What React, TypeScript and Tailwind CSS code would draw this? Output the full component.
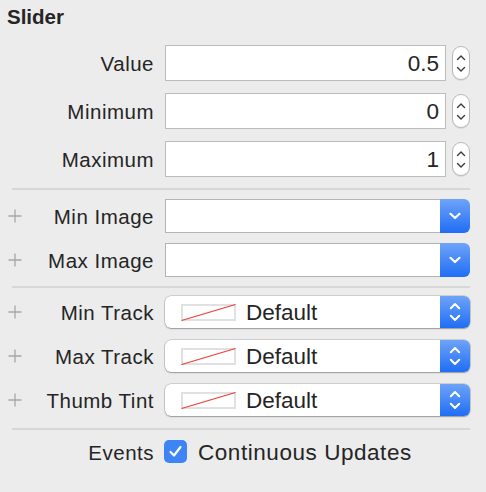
import React from "react";

const Plus = () => (
  <svg width="14" height="14" viewBox="0 0 14 14" className="ml-[8px] shrink-0">
    <path d="M7 0.5V13.5M0.5 7H13.5" stroke="#a6a6a6" strokeWidth="1.3" fill="none" />
  </svg>
);

const Stepper = () => (
  <div className="ml-[6px] flex h-[34px] w-[18px] flex-col items-center justify-center gap-[5px] rounded-[9px] border border-[#b9b9b9] bg-white shadow-[0_1px_0_rgba(0,0,0,0.08)]">
    <svg width="10" height="7" viewBox="0 0 10 7">
      <path d="M1.5 5.5L5 2L8.5 5.5" stroke="#3a3a3a" strokeWidth="1.4" fill="none" strokeLinecap="round" strokeLinejoin="round" />
    </svg>
    <svg width="10" height="7" viewBox="0 0 10 7">
      <path d="M1.5 1.5L5 5L8.5 1.5" stroke="#3a3a3a" strokeWidth="1.4" fill="none" strokeLinecap="round" strokeLinejoin="round" />
    </svg>
  </div>
);

const NumberRow = ({ label, value, mt }: { label: string; value: string; mt: string }) => (
  <div className={`flex h-[36px] items-center ${mt}`}>
    <div className="w-[154px] pt-[2px] text-right text-[20.5px] leading-[24px] tracking-[0.5px]">{label}</div>
    <div className="ml-[11px] flex h-[36px] w-[281px] items-center justify-end border border-[#bcbcbc] bg-white pr-[6px] pt-[2px] text-[22.5px] leading-[26px]">
      {value}
    </div>
    <Stepper />
  </div>
);

const Separator = ({ mt }: { mt: string }) => (
  <div className={`ml-[12px] h-[2px] w-[458px] bg-[#d7d7d7] ${mt}`} />
);

const BlueGrad = "bg-[linear-gradient(#6ea3f8,#1f6ef5)]";

const ImageRow = ({ label, mt }: { label: string; mt: string }) => (
  <div className={`flex h-[34px] items-center ${mt}`}>
    <div className="flex w-[154px] items-center">
      <Plus />
      <div className="flex-1 pt-[2px] text-right text-[20.5px] leading-[24px] tracking-[0.5px]">{label}</div>
    </div>
    <div className="ml-[11px] flex h-[34px] w-[305px]">
      <div className="h-full flex-1 border-y border-l border-[#b4b4b4] bg-white" />
      <div className={`flex h-full w-[30px] items-center justify-center rounded-r-[6px] ${BlueGrad}`}>
        <svg width="12" height="8" viewBox="0 0 12 8">
          <path d="M1.5 1.8L6 6L10.5 1.8" stroke="white" strokeWidth="2.2" fill="none" strokeLinecap="round" strokeLinejoin="round" />
        </svg>
      </div>
    </div>
  </div>
);

const ColorRow = ({ label, mt }: { label: string; mt: string }) => (
  <div className={`flex h-[32px] items-center ${mt}`}>
    <div className="flex w-[154px] items-center">
      <Plus />
      <div className="flex-1 pt-[2px] text-right text-[20.5px] leading-[24px] tracking-[0.5px]">{label}</div>
    </div>
    <div className="ml-[11px] flex h-[32px] w-[305px] rounded-[6px] bg-white shadow-[0_0_0_0.5px_rgba(0,0,0,0.25),0_1px_1.5px_rgba(0,0,0,0.25)]">
      <div className="flex flex-1 items-center">
        <svg width="55" height="17" viewBox="0 0 55 17" className="ml-[16px] shrink-0">
          <rect x="1" y="1" width="53" height="15" fill="white" stroke="#e1e1e1" strokeWidth="2" />
          <path d="M0.5 16.5L54.5 0.5" stroke="#f0483e" strokeWidth="1.2" />
        </svg>
        <span className="ml-[10px] pt-[2px] text-[22.5px] leading-[26px]">Default</span>
      </div>
      <div className={`flex h-full w-[30px] flex-col items-center justify-center gap-[4px] rounded-r-[6px] ${BlueGrad}`}>
        <svg width="12" height="8" viewBox="0 0 12 8">
          <path d="M1.8 6.2L6 2L10.2 6.2" stroke="white" strokeWidth="2" fill="none" strokeLinecap="round" strokeLinejoin="round" />
        </svg>
        <svg width="12" height="8" viewBox="0 0 12 8">
          <path d="M1.8 1.8L6 6L10.2 1.8" stroke="white" strokeWidth="2" fill="none" strokeLinecap="round" strokeLinejoin="round" />
        </svg>
      </div>
    </div>
  </div>
);

export default function App() {
  return (
    <div className="flex h-[492px] w-[486px] flex-col bg-[#ececec] font-['Liberation_Sans',Arial,sans-serif] text-[#252525]">
      <div className="pl-[7px] pt-[5px] text-[20.5px] font-bold leading-[24px]">Slider</div>
      <NumberRow label="Value" value="0.5" mt="mt-[16px]" />
      <NumberRow label="Minimum" value="0" mt="mt-[12px]" />
      <NumberRow label="Maximum" value="1" mt="mt-[12px]" />
      <Separator mt="mt-[11px]" />
      <ImageRow label="Min Image" mt="mt-[9px]" />
      <ImageRow label="Max Image" mt="mt-[10px]" />
      <Separator mt="mt-[9px]" />
      <ColorRow label="Min Track" mt="mt-[8px]" />
      <ColorRow label="Max Track" mt="mt-[12px]" />
      <ColorRow label="Thumb Tint" mt="mt-[12px]" />
      <Separator mt="mt-[12px]" />
      <div className="mt-[10px] flex h-[23px] items-center">
        <div className="w-[154px] pt-[2px] text-right text-[20.5px] leading-[24px] tracking-[0.5px]">Events</div>
        <div className="ml-[10px] flex h-[23px] w-[23px] items-center justify-center rounded-[5px] bg-[#3d84f6]">
          <svg width="15" height="13" viewBox="0 0 15 13">
            <path d="M2.5 7L6 10.5L12.5 2" stroke="white" strokeWidth="2.2" fill="none" strokeLinecap="round" strokeLinejoin="round" />
          </svg>
        </div>
        <span className="ml-[11px] pt-[2px] text-[22.5px] leading-[26px] tracking-[0.55px]">Continuous Updates</span>
      </div>
    </div>
  );
}
